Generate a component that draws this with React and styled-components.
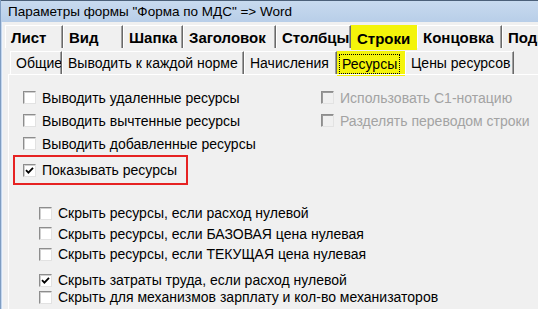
import React from 'react'
import styled, { createGlobalStyle } from 'styled-components'

const Global = createGlobalStyle`
  html, body { margin: 0; padding: 0; background: #f0f0f0; }
  body {
    width: 538px;
    height: 309px;
    overflow: hidden;
    font-family: "Liberation Sans", Arial, sans-serif;
  }
`

const Window = styled.div`
  width: 538px;
  height: 309px;
  overflow: hidden;
  box-sizing: border-box;
  background: #f0f0f0;
  border-left: 1px solid #7f9dc2;
  box-shadow: inset 1px 0 #c3d6ee, inset 2px 0 #eef3fa;
  display: flex;
  flex-direction: column;
`

const TitleBar = styled.div`
  height: 22px;
  box-sizing: border-box;
  border-top: 1px solid #4c6079;
  background: linear-gradient(#c8daef, #b8cee8);
  padding-left: 7px;
  display: flex;
  align-items: center;
  font-size: 13.5px;
  color: #000;
  white-space: nowrap;
`

const TabRow = styled.div`
  display: flex;
  align-items: flex-start;
  height: ${p => p.h}px;
  margin-top: ${p => p.mt}px;
  padding-left: ${p => p.pl}px;
  white-space: nowrap;
`

const Tab = styled.div`
  flex: none;
  width: ${p => p.w}px;
  height: ${p => (p.active ? p.h + 2 : p.h)}px;
  box-sizing: border-box;
  padding-left: ${p => p.pad}px;
  display: flex;
  align-items: center;
  overflow: hidden;
  font-size: ${p => (p.bold ? 15 : 14)}px;
  font-weight: ${p => (p.bold ? 700 : 400)};
  color: #000;
  background: ${p => (p.active ? '#f4f40a' : 'transparent')};
  border-top: 1px solid ${p => (p.active ? '#f4f40a' : '#ffffff')};
  border-left: 1px solid ${p => (p.active ? '#f4f40a' : '#ffffff')};
  border-right: 1px solid ${p => (p.active ? '#f4f40a' : '#696969')};
  box-shadow: ${p => (p.active ? 'none' : 'inset -1px 0 #a0a0a0')};
`

const Focus = styled.span`
  outline: 1px dotted #000;
  outline-offset: 1px;
  padding: 0 1px;
`

const Page = styled.div`
  flex: 1;
  margin-left: 7px;
  border-left: 1px solid #ffffff;
  border-top: 1px solid #ffffff;
  padding-top: 11px;
`

const TopGrid = styled.div`
  display: grid;
  grid-template-columns: 312px 1fr;
`

const Column = styled.div`
  display: flex;
  flex-direction: column;
  padding-left: ${p => p.pl}px;
`

const Row = styled.div`
  height: ${p => p.h}px;
  display: flex;
  align-items: center;
  gap: 6px;
  font-size: 14px;
  color: ${p => (p.disabled ? '#a3a3a3' : '#000')};
  white-space: nowrap;
`

const Highlight = styled.div`
  width: 175px;
  height: 30px;
  box-sizing: border-box;
  margin-left: -10px;
  border: 2px solid #e62222;
  padding-left: 8px;
  display: flex;
  align-items: center;
`

const BottomGroup = styled.div`
  display: flex;
  flex-direction: column;
  padding-left: 30px;
  margin-top: ${p => p.mt}px;
`

const Box = styled.span`
  flex: none;
  width: 13px;
  height: 13px;
  box-sizing: border-box;
  border: 1px solid;
  border-color: #8d8d8d #e2e2e2 #e2e2e2 #8d8d8d;
  background: ${p => (p.disabled ? '#f0f0f0' : '#ffffff')};
  box-shadow: inset 1px 1px ${p => (p.disabled ? '#9a9a9a' : '#d0d0d0')};
  display: flex;
  align-items: center;
  justify-content: center;
`

function Check({ checked, disabled }) {
  return (
    <Box disabled={disabled}>
      {checked && (
        <svg width="9" height="9" viewBox="0 0 9 9">
          <path d="M1 4.2 L3.4 6.6 L8 1.8" fill="none" stroke="#000" strokeWidth="1.8" />
        </svg>
      )}
    </Box>
  )
}

function Option({ label, checked, disabled, h = 23 }) {
  return (
    <Row h={h} disabled={disabled}>
      <Check checked={checked} disabled={disabled} />
      {label}
    </Row>
  )
}

const mainTabs = [
  { t: 'Лист', w: 58 },
  { t: 'Вид', w: 60 },
  { t: 'Шапка', w: 60 },
  { t: 'Заголовок', w: 93 },
  { t: 'Столбцы', w: 75 },
  { t: 'Строки', w: 66, active: true },
  { t: 'Концовка', w: 85 },
  { t: 'Подп', w: 40 },
]

const subTabs = [
  { t: 'Общие', w: 52 },
  { t: 'Выводить к каждой норме', w: 182 },
  { t: 'Начисления', w: 93 },
  { t: 'Ресурсы', w: 68, active: true },
  { t: 'Цены ресурсов', w: 109 },
]

function App() {
  return (
    <>
      <Global />
      <Window>
        <TitleBar>Параметры формы "Форма по МДС" =&gt; Word</TitleBar>
        <TabRow h={24} mt={3} pl={4}>
          {mainTabs.map(tab => (
            <Tab key={tab.t} w={tab.w} h={23} pad={5} bold active={tab.active}>
              {tab.t}
            </Tab>
          ))}
        </TabRow>
        <TabRow h={23} mt={2} pl={9}>
          {subTabs.map(tab => (
            <Tab key={tab.t} w={tab.w} h={23} pad={tab.active ? 3 : 5} active={tab.active}>
              {tab.active ? <Focus>{tab.t}</Focus> : tab.t}
            </Tab>
          ))}
        </TabRow>
        <Page>
          <TopGrid>
            <Column pl={14}>
              <Option label="Выводить удаленные ресурсы" />
              <Option label="Выводить вычтенные ресурсы" />
              <Option label="Выводить добавленные ресурсы" />
              <Highlight>
                <Option label="Показывать ресурсы" checked h={26} />
              </Highlight>
            </Column>
            <Column>
              <Option label="Использовать С1-нотацию" disabled />
              <Option label="Разделять переводом строки" disabled />
            </Column>
          </TopGrid>
          <BottomGroup mt={18}>
            <Option h={20.5} label="Скрыть ресурсы, если расход нулевой" />
            <Option h={20.5} label="Скрыть ресурсы, если БАЗОВАЯ цена нулевая" />
            <Option h={20.5} label="Скрыть ресурсы, если ТЕКУЩАЯ цена нулевая" />
          </BottomGroup>
          <BottomGroup mt={7}>
            <Option h={17} checked label="Скрыть затраты труда, если расход нулевой" />
            <Option h={17} label="Скрыть для механизмов зарплату и кол-во механизаторов" />
          </BottomGroup>
        </Page>
      </Window>
    </>
  )
}

export default App
